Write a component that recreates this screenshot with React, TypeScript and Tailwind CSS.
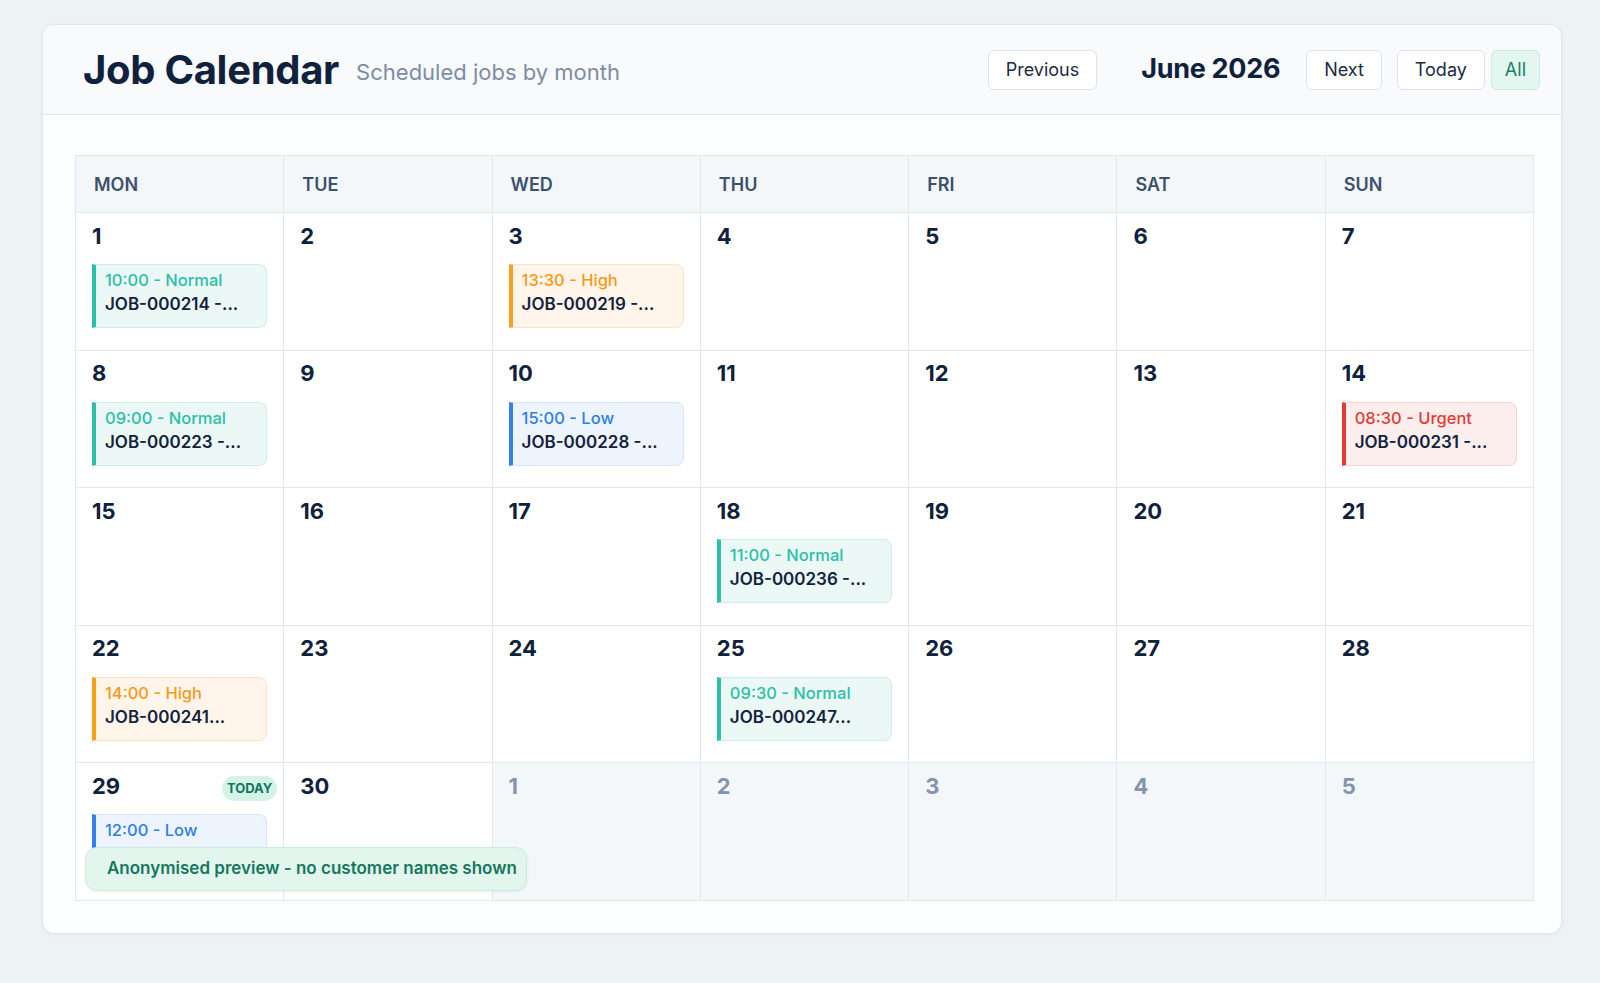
import React from "react";

type Priority = "Normal" | "High" | "Low" | "Urgent";

interface Job {
  time: string;
  priority: Priority;
  ref: string;
}

interface Cell {
  day: number;
  outside?: boolean;
  today?: boolean;
  jobs?: Job[];
}

const styles: Record<Priority, { box: string; time: string }> = {
  Normal: {
    box: "bg-[#ebf8f6] border-[#cfeee8] border-l-[#2cc0a8]",
    time: "text-[#2cbfa7]",
  },
  High: {
    box: "bg-[#fff5eb] border-[#fce3c8] border-l-[#f7a01c]",
    time: "text-[#f59a17]",
  },
  Low: {
    box: "bg-[#eef4fe] border-[#d6e4fa] border-l-[#3581ea]",
    time: "text-[#2f7fe3]",
  },
  Urgent: {
    box: "bg-[#fdeeee] border-[#f8d3d3] border-l-[#e53b35]",
    time: "text-[#e23b33]",
  },
};

const days = ["MON", "TUE", "WED", "THU", "FRI", "SAT", "SUN"];

const cells: Cell[] = [
  { day: 1, jobs: [{ time: "10:00", priority: "Normal", ref: "JOB-000214 -..." }] },
  { day: 2 },
  { day: 3, jobs: [{ time: "13:30", priority: "High", ref: "JOB-000219 -..." }] },
  { day: 4 },
  { day: 5 },
  { day: 6 },
  { day: 7 },
  { day: 8, jobs: [{ time: "09:00", priority: "Normal", ref: "JOB-000223 -..." }] },
  { day: 9 },
  { day: 10, jobs: [{ time: "15:00", priority: "Low", ref: "JOB-000228 -..." }] },
  { day: 11 },
  { day: 12 },
  { day: 13 },
  { day: 14, jobs: [{ time: "08:30", priority: "Urgent", ref: "JOB-000231 -..." }] },
  { day: 15 },
  { day: 16 },
  { day: 17 },
  { day: 18, jobs: [{ time: "11:00", priority: "Normal", ref: "JOB-000236 -..." }] },
  { day: 19 },
  { day: 20 },
  { day: 21 },
  { day: 22, jobs: [{ time: "14:00", priority: "High", ref: "JOB-000241..." }] },
  { day: 23 },
  { day: 24 },
  { day: 25, jobs: [{ time: "09:30", priority: "Normal", ref: "JOB-000247..." }] },
  { day: 26 },
  { day: 27 },
  { day: 28 },
  { day: 29, today: true, jobs: [{ time: "12:00", priority: "Low", ref: "" }] },
  { day: 30 },
  { day: 1, outside: true },
  { day: 2, outside: true },
  { day: 3, outside: true },
  { day: 4, outside: true },
  { day: 5, outside: true },
];

const JobChip = ({ job }: { job: Job }) => {
  const s = styles[job.priority];
  return (
    <div className={`mt-[14px] h-[64px] rounded-r-lg border border-l-4 pl-[9px] pr-2 pt-[3px] leading-[24px] ${s.box}`}>
      <div className={`text-[16.5px] font-medium ${s.time}`}>
        {job.time} - {job.priority}
      </div>
      {job.ref && (
        <div className="text-[17px] font-semibold text-[#13223d] whitespace-nowrap overflow-hidden">
          {job.ref}
        </div>
      )}
    </div>
  );
};

const NavButton = ({ label, active }: { label: string; active?: boolean }) => (
  <button
    className={`h-10 rounded-md border text-[18px] ${
      active
        ? "px-[13px] bg-[#e3f6ef] border-[#c8ecdf] text-[#138363]"
        : "px-[17px] bg-white border-[#dbe4ea] text-[#1c2b40]"
    }`}
  >
    {label}
  </button>
);

export default function App() {
  return (
    <div
      className="min-h-screen bg-[#edf3f5] pt-6 pl-[42px] pr-[38px]"
      style={{ fontFamily: "Inter, 'Noto Sans', sans-serif" }}
    >
      <div className="rounded-xl border border-[#dde7ec] bg-[#fdfefe] shadow-[0_1px_4px_rgba(30,60,90,0.06)]">
        {/* header */}
        <div className="flex items-center h-[90px] border-b border-[#dbe6ec] bg-[#f8fafc] rounded-t-xl pl-[40px] pr-[21px]">
          <h1 className="text-[40px] font-bold tracking-[-0.3px] text-[#0f213d]">Job Calendar</h1>
          <span className="ml-[17px] mt-[6px] text-[22px] text-[#7d8da5]">Scheduled jobs by month</span>
          <div className="ml-auto flex items-center">
            <NavButton label="Previous" />
            <div className="ml-[44px] mr-[26px] text-[27px] font-bold tracking-[-0.3px] text-[#0f213d]">June 2026</div>
            <NavButton label="Next" />
            <div className="ml-[15px]">
              <NavButton label="Today" />
            </div>
            <div className="ml-[6px]">
              <NavButton label="All" active />
            </div>
          </div>
        </div>

        {/* calendar */}
        <div className="pl-[32px] pr-[27px] pt-[40px] pb-[32px]">
          <div className="relative border-t border-l border-[#e1e9ef]">
            <div className="grid grid-cols-7 bg-[#f3f7fa]">
              {days.map((d) => (
                <div
                  key={d}
                  className="h-[57px] flex items-center pl-[18px] border-r border-b border-[#e1e9ef] text-[18px] font-semibold text-[#3d506c]"
                >
                  {d}
                </div>
              ))}
            </div>
            <div className="grid grid-cols-7 grid-rows-[repeat(5,137.6px)]">
              {cells.map((c, i) => (
                <div
                  key={i}
                  className={`overflow-hidden border-r border-b border-[#e1e9ef] px-4 pt-[9px] ${
                    c.outside ? "bg-[#f4f7fa]" : "bg-white"
                  }`}
                >
                  <div className="flex items-center justify-between h-7">
                    <span
                      className={`text-[22px] font-bold ${
                        c.outside ? "text-[#8494ab]" : "text-[#10213c]"
                      }`}
                    >
                      {c.day}
                    </span>
                    {c.today && (
                      <span className="-mr-[10px] mt-[4px] rounded-full bg-[#d3f2e8] px-[5px] py-[5px] leading-[15px] text-[13px] font-bold text-[#12765d]">
                        TODAY
                      </span>
                    )}
                  </div>
                  {c.jobs?.map((j, k) => <JobChip key={k} job={j} />)}
                </div>
              ))}
            </div>

            <div className="absolute left-[9px] bottom-[10px] rounded-xl border border-[#c9ecdf] bg-[#e2f6ee] pl-[21px] pr-[9px] py-[8px] text-[17px] font-semibold text-[#15785c] shadow-[0_1px_3px_rgba(20,90,70,0.08)]">
              Anonymised preview - no customer names shown
            </div>
          </div>
        </div>
      </div>
    </div>
  );
}
